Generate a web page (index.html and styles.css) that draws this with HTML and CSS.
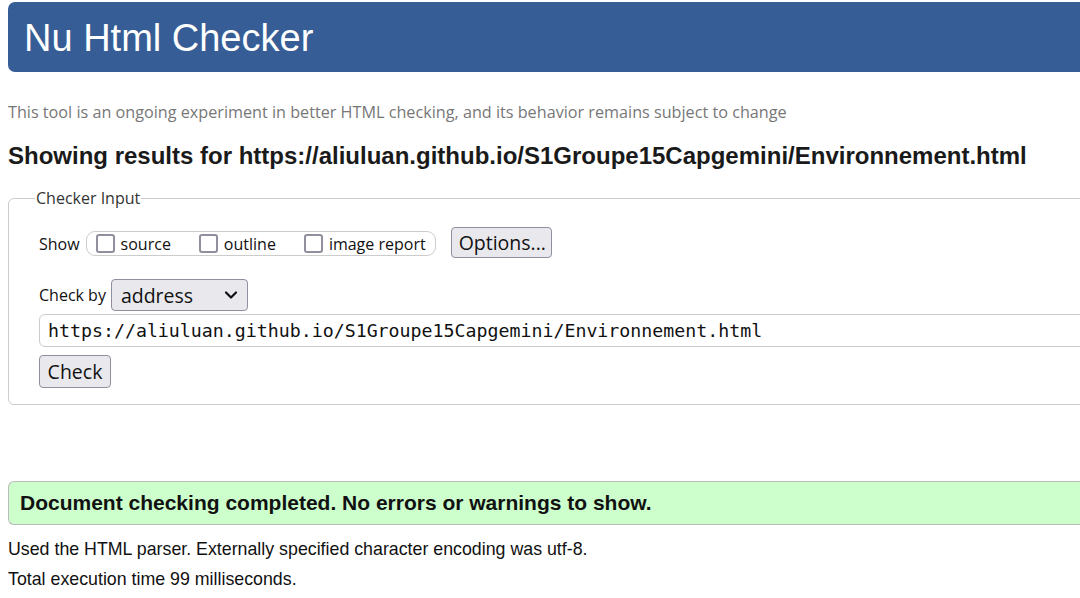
FILE: index.html
```html
<!DOCTYPE html>
<html>
<head>
<meta charset="utf-8">
<title>Nu Html Checker</title>
<link rel="stylesheet" href="styles.css">
</head>
<body>
<div class="page">
  <header class="banner"><h1>Nu Html Checker</h1></header>
  <p class="intro">This tool is an ongoing experiment in better HTML checking, and its behavior remains subject to change</p>
  <h2 class="results">Showing results for https://aliuluan.github.io/S1Groupe15Capgemini/Environnement.html</h2>
  <fieldset class="checker">
    <legend>Checker Input</legend>
    <div class="row show-row">
      <span class="lbl">Show</span>
      <span class="pill">
        <label class="cb"><span class="box"></span>source</label>
        <label class="cb"><span class="box"></span>outline</label>
        <label class="cb"><span class="box"></span>image report</label>
      </span>
      <span class="btn options">Options...</span>
    </div>
    <div class="row by-row">
      <span class="lbl">Check by</span>
      <span class="select">address<svg class="chev" width="14" height="10" viewBox="0 0 14 10"><path d="M2 2.5 L7 7.5 L12 2.5" fill="none" stroke="#111" stroke-width="2.2" stroke-linecap="round" stroke-linejoin="round"/></svg></span>
    </div>
    <div class="url">https://aliuluan.github.io/S1Groupe15Capgemini/Environnement.html</div>
    <span class="btn check">Check</span>
  </fieldset>
  <div class="success">Document checking completed. No errors or warnings to show.</div>
  <p class="info">Used the HTML parser. Externally specified character encoding was utf-8.</p>
  <p class="info">Total execution time 99 milliseconds.</p>
</div>
</body>
</html>
```
FILE: styles.css
```css
html, body {
  margin: 0;
  padding: 0;
  overflow: hidden;
  background: #fff;
}
.page {
  width: 1120px;
  padding: 2px 0 0 8px;
  font-family: "Liberation Sans", Arial, sans-serif;
  color: #111;
}
.banner {
  background: #365d95;
  height: 70px;
  border-radius: 7px 0 0 7px;
  display: flex;
  align-items: center;
  padding-left: 16px;
}
.banner h1 {
  margin: 2px 0 0 0;
  color: #fff;
  font-weight: normal;
  font-size: 38px;
  line-height: 1;
}
.intro {
  margin: 29px 0 0 0;
  font-family: "Open Sans", "Noto Sans", sans-serif;
  font-size: 16.2px;
  line-height: 22px;
  color: #777;
}
.results {
  margin: 19px 0 0 0;
  font-size: 24px;
  line-height: 28px;
  font-weight: bold;
  color: #1a1a1a;
}
.checker {
  margin: 19px 0 0 0;
  border: 1px solid #ccc;
  border-radius: 6px;
  padding: 6px 0 16px 30px;
  font-family: "Open Sans", "Noto Sans", sans-serif;
  font-size: 16px;
}
.checker legend {
  margin-left: -4px;
  padding: 0 1px;
  color: #333;
  font-size: 16px;
  line-height: 18px;
}
.row {
  display: flex;
  align-items: center;
}
.lbl {
  color: #111;
  margin-right: 6px;
}
.show-row {
  margin-top: 15px;
  height: 32px;
}
.pill {
  display: flex;
  align-items: center;
  height: 25px;
  box-sizing: border-box;
  border: 1px solid #ccc;
  border-radius: 9px;
  padding: 0 9px 0 9px;
  gap: 28px;
  margin-top: -1px;
}
.cb {
  display: flex;
  align-items: center;
  color: #111;
}
.box {
  width: 15px;
  height: 15px;
  border: 2px solid #8f8f9d;
  border-radius: 3px;
  margin-right: 6px;
}
.btn {
  display: inline-flex;
  align-items: center;
  background: #e9e9ed;
  border: 1px solid #8f8f9d;
  border-radius: 4px;
  font-size: 19.5px;
  color: #111;
  padding: 0 7px;
  box-sizing: border-box;
}
.options {
  margin-left: 15px;
  margin-top: -3px;
  height: 31px;
  width: 101px;
}
.by-row {
  margin-top: 19px;
}
.select {
  display: inline-flex;
  align-items: center;
  justify-content: space-between;
  box-sizing: border-box;
  width: 137px;
  height: 32px;
  margin-left: -1px;
  background: #e9e9ed;
  border: 1px solid #8f8f9d;
  border-radius: 4px;
  font-size: 19.5px;
  padding: 0 9px 0 9px;
  color: #111;
}
.url {
  margin-top: 3px;
  box-sizing: border-box;
  width: 1200px;
  height: 33px;
  border: 1px solid #ccc;
  border-radius: 6px;
  padding: 0 8px;
  display: flex;
  align-items: center;
  font-family: "DejaVu Sans Mono", "Liberation Mono", monospace;
  font-size: 18.25px;
  color: #111;
}
.check {
  margin-top: 8px;
  height: 33px;
  width: 72px;
  justify-content: center;
  padding: 0;
}
.success {
  margin-top: 76px;
  box-sizing: border-box;
  height: 44px;
  background: #ccffcc;
  border: 1px solid #bbb;
  border-right: none;
  border-radius: 6px 0 0 6px;
  display: flex;
  align-items: center;
  padding-left: 11px;
  font-weight: bold;
  font-size: 21px;
  color: #111;
}
.info {
  margin: 0;
  font-size: 17.8px;
  line-height: 30px;
  color: #111;
}
.success + .info {
  margin-top: 9px;
}
```
